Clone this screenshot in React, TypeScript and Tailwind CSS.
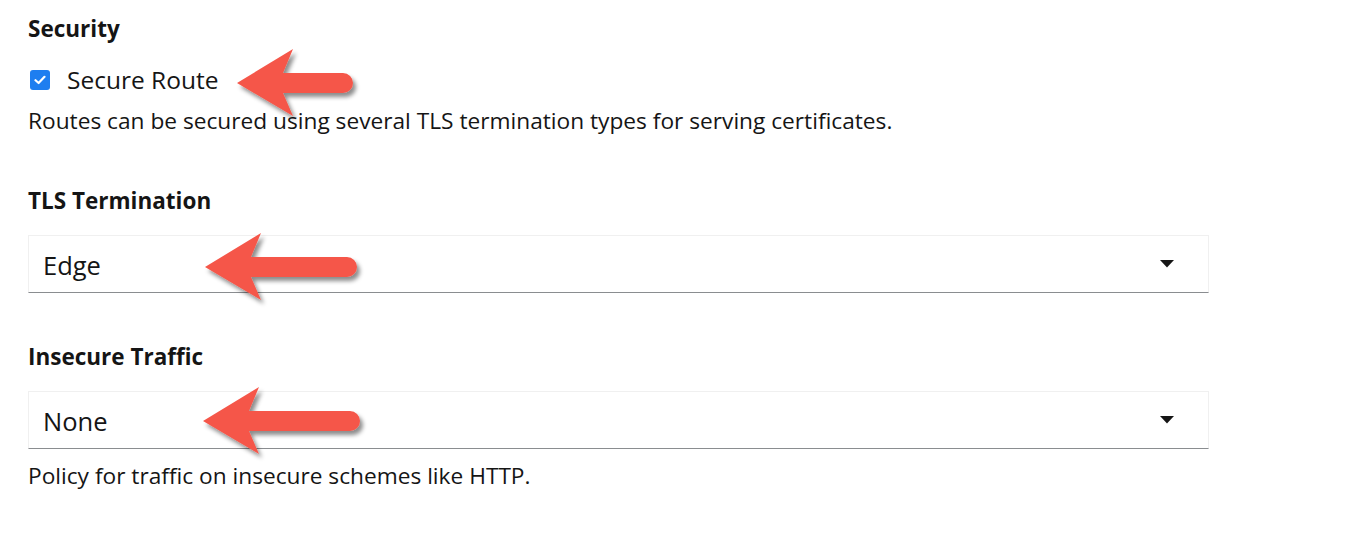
import React from "react";

const FONT = "font-['Open_Sans','Liberation_Sans',sans-serif]";

function Arrow({ x, y, len }: { x: number; y: number; len: number }) {
  // x, y = tip of the arrow, len = tip to end of the shaft
  const end = len - 10;
  return (
    <svg
      className="absolute pointer-events-none"
      style={{ left: x - 4, top: y - 40 }}
      width={len + 20}
      height={86}
      viewBox={`-4 -40 ${len + 20} 86`}
    >
      <defs>
        <filter id={`shadow${x}`} x="-20%" y="-30%" width="140%" height="160%">
          <feDropShadow dx="3" dy="4" stdDeviation="2.2" floodColor="#000" floodOpacity="0.45" />
        </filter>
      </defs>
      <path
        d={`M0 0 L56 -34 L46 -10 L${end} -10 A10 10 0 0 1 ${end} 10 L46 10 L56 33 Z`}
        fill="#f5574a"
        filter={`url(#shadow${x})`}
      />
    </svg>
  );
}

function Caret() {
  return (
    <svg width="14" height="8" viewBox="0 0 14 8" className="fill-[#151515]">
      <path d="M0 0 H14 L7 7.5 Z" />
    </svg>
  );
}

function SelectBox({ value }: { value: string }) {
  return (
    <div className="w-[1181px] h-[58px] flex items-center justify-between bg-white border border-[#f0f0f0] border-b-[#8a8d90] pl-[14px] pr-[34px]">
      <span className="text-[25.5px] leading-[30px] pt-[1px] text-[#151515]">{value}</span>
      <Caret />
    </div>
  );
}

export default function App() {
  return (
    <div className={`relative w-[1346px] h-[536px] bg-white text-[#151515] pl-[28px] pt-[14px] ${FONT}`}>
      <div className="text-[22.5px] font-bold leading-[30px]">Security</div>

      <label className="mt-[21px] flex items-center h-[30px]">
        <span className="ml-[2px] w-[20px] h-[20px] rounded-[3px] bg-[#1e7ef0] flex items-center justify-center">
          <svg width="12" height="10" viewBox="0 0 12 10">
            <path d="M1.5 5.2 L4.6 8 L10.5 1.8" stroke="#fff" strokeWidth="2.2" fill="none" strokeLinecap="round" strokeLinejoin="round" />
          </svg>
        </span>
        <span className="ml-[17px] text-[24.5px]">Secure Route</span>
      </label>

      <p className="mt-[11px] text-[22.7px] leading-[30px]">
        Routes can be secured using several TLS termination types for serving certificates.
      </p>

      <div className="mt-[50px] text-[22.5px] font-bold leading-[30px]">TLS Termination</div>
      <div className="mt-[19px]">
        <SelectBox value="Edge" />
      </div>

      <div className="mt-[49px] text-[22.5px] font-bold leading-[30px]">Insecure Traffic</div>
      <div className="mt-[19px]">
        <SelectBox value="None" />
      </div>

      <p className="mt-[12px] text-[22.7px] leading-[30px]">Policy for traffic on insecure schemes like HTTP.</p>

      <Arrow x={237} y={83} len={116} />
      <Arrow x={205} y={267} len={152} />
      <Arrow x={203} y={421} len={157} />
    </div>
  );
}
